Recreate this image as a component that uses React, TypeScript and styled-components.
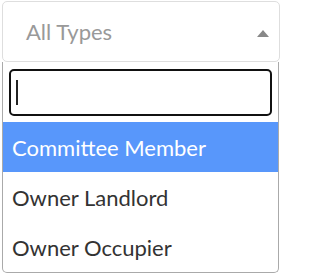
import React from "react";
import styled, { createGlobalStyle } from "styled-components";

const Global = createGlobalStyle`
  html, body { margin: 0; padding: 0; background: #fff; }
  body { font-family: Lato, "Noto Sans", sans-serif; }
  * { box-sizing: border-box; }
`;

const Wrap = styled.div`
  width: 283px;
  height: 276px;
  padding: 1px 3px 0 2px;
  position: relative;
  overflow: hidden;
`;

const Selection = styled.div`
  height: 61px;
  border: 1px solid #dedede;
  border-radius: 5px;
  display: flex;
  align-items: center;
  justify-content: space-between;
  padding: 0 10px 0 23px;
  background: #fff;
`;

const Placeholder = styled.span`
  font-size: 22px;
  color: #999;
  font-family: Lato, sans-serif;
  margin-top: -1px;
`;

const Arrow = styled.span`
  width: 0;
  height: 0;
  border-style: solid;
  border-width: 0 6.5px 7px 6.5px;
  border-color: transparent transparent #888 transparent;
  margin-top: 3px;
`;

const Dropdown = styled.div`
  width: 277px;
  border: 1px solid #aaa;
  border-top: none;
  border-radius: 0 0 5px 5px;
  background: #fff;
  padding-top: 7px;
  height: 211px;
`;

const SearchWrap = styled.div`
  padding: 0 6px;
`;

const SearchBox = styled.div`
  height: 47px;
  border: 2px solid #111;
  border-radius: 5px;
  display: flex;
  align-items: center;
  padding-left: 5px;
`;

const Caret = styled.span`
  width: 2px;
  height: 25px;
  background: #222;
`;

const List = styled.ul`
  list-style: none;
  margin: 6px 0 0;
  padding: 0;
`;

const Option = styled.li<{ $active?: boolean }>`
  height: 50px;
  display: flex;
  align-items: center;
  padding-left: 9px;
  font-size: 22px;
  font-family: Lato, sans-serif;
  color: ${(p) => (p.$active ? "#fff" : "#333")};
  background: ${(p) => (p.$active ? "#5897fb" : "transparent")};
`;

export default function App() {
  return (
    <>
      <Global />
      <Wrap>
        <Selection>
          <Placeholder>All Types</Placeholder>
          <Arrow />
        </Selection>
        <Dropdown>
          <SearchWrap>
            <SearchBox>
              <Caret />
            </SearchBox>
          </SearchWrap>
          <List>
            <Option $active>Committee Member</Option>
            <Option>Owner Landlord</Option>
            <Option>Owner Occupier</Option>
          </List>
        </Dropdown>
      </Wrap>
    </>
  );
}
